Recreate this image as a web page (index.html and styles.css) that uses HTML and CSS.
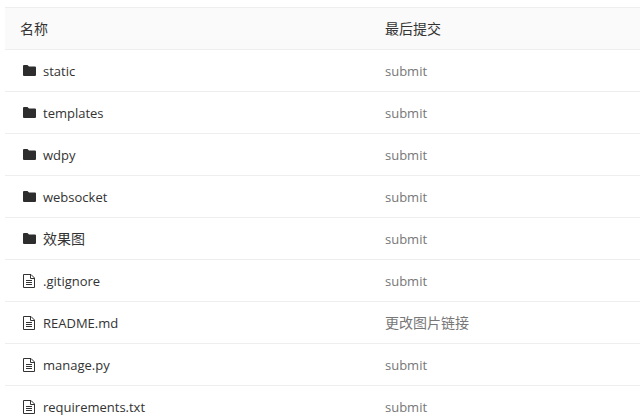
FILE: index.html
```html
<!DOCTYPE html>
<html lang="zh-CN">
<head>
    <meta charset="UTF-8">
    <title>文件列表</title>
    <link rel="stylesheet" href="styles.css">
</head>
<body>
    <svg class="icon-defs" width="0" height="0">
        <symbol id="folder" viewBox="0 0 13 11">
            <path d="M1 0h3.500l1.500 1.500h6a1 1 0 0 1 1 1v7.500a1 1 0 0 1-1 1H1a1 1 0 0 1-1-1V1a1 1 0 0 1 1-1z" fill="#2d2d2d"/>
        </symbol>
        <symbol id="file" viewBox="0 0 12 14">
            <path d="M.5 .5h7.500l3.500 3.500v9.500H.5z" fill="none" stroke="#333"/>
            <path d="M7.500 .5v4h4M3 6.500h6M3 8.500h6M3 10.500h6" fill="none" stroke="#333"/>
        </symbol>
    </svg>
    <div class="file-list">
        <div class="row head">
            <div class="name"><span class="cjk">名称</span></div>
            <div class="commit"><span class="cjk">最后提交</span></div>
        </div>
        <div class="row">
            <div class="name"><svg class="folder-icon"><use href="#folder"/></svg>static</div>
            <div class="commit">submit</div>
        </div>
        <div class="row">
            <div class="name"><svg class="folder-icon"><use href="#folder"/></svg>templates</div>
            <div class="commit">submit</div>
        </div>
        <div class="row">
            <div class="name"><svg class="folder-icon"><use href="#folder"/></svg>wdpy</div>
            <div class="commit">submit</div>
        </div>
        <div class="row">
            <div class="name"><svg class="folder-icon"><use href="#folder"/></svg>websocket</div>
            <div class="commit">submit</div>
        </div>
        <div class="row">
            <div class="name"><svg class="folder-icon"><use href="#folder"/></svg><span class="cjk">效果图</span></div>
            <div class="commit">submit</div>
        </div>
        <div class="row">
            <div class="name"><svg class="file-icon"><use href="#file"/></svg>.gitignore</div>
            <div class="commit">submit</div>
        </div>
        <div class="row">
            <div class="name"><svg class="file-icon"><use href="#file"/></svg>README.md</div>
            <div class="commit"><span class="cjk">更改图片链接</span></div>
        </div>
        <div class="row">
            <div class="name"><svg class="file-icon"><use href="#file"/></svg>manage.py</div>
            <div class="commit">submit</div>
        </div>
        <div class="row">
            <div class="name"><svg class="file-icon"><use href="#file"/></svg>requirements.txt</div>
            <div class="commit">submit</div>
        </div>
    </div>
</body>
</html>
```

FILE: styles.css
```css
html, body {
    height: 100%;
    overflow: hidden;
}
body {
    margin: 0;
    padding: 7px 0 0 5px;
    box-sizing: border-box;
    background-color: white;
    font-family: "Open Sans", "Noto Sans CJK SC", sans-serif;
    font-size: 13px;
    color: #333333;
}
.icon-defs {
    position: absolute;
}
.file-list {
    border-top: 1px solid #eeeeee;
}
.row {
    display: flex;
    align-items: center;
    height: 41px;
    border-bottom: 1px solid #eeeeee;
}
.head {
    background-color: #fafafa;
}
.name {
    display: flex;
    align-items: center;
    width: 380px;
    padding-left: 15px;
    box-sizing: border-box;
}
.commit {
    color: #777777;
}
.head .commit {
    color: #333333;
}
.cjk {
    font-size: 14px;
    line-height: 20px;
}
.folder-icon {
    width: 13px;
    height: 11px;
    margin: 0 7px 0 3px;
}
.file-icon {
    width: 12px;
    height: 14px;
    margin: 0 8px 0 3px;
}
```
